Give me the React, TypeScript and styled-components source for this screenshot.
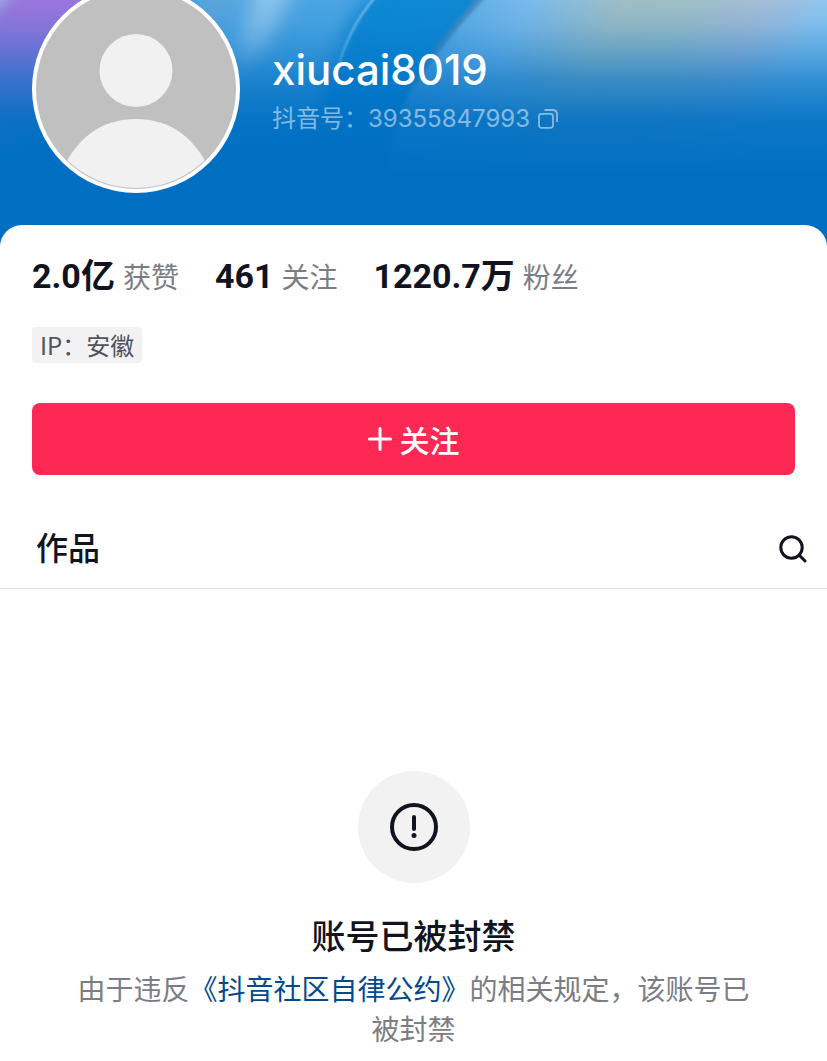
import React from "react";
import styled, { createGlobalStyle } from "styled-components";

const GlobalStyle = createGlobalStyle`
  *, *::before, *::after { box-sizing: border-box; }
  body {
    margin: 0;
    background: #fff;
    color: #11141f;
    font-family: Inter, "Noto Sans CJK SC", sans-serif;
  }
  h1, h2, p, dl, dd, dt { margin: 0; }
  button { border: 0; padding: 0; background: none; font: inherit; color: inherit; cursor: pointer; }
`;

const Page = styled.div`
  display: flex;
  flex-direction: column;
`;

const Hero = styled.header`
  display: flex;
  align-items: flex-start;
  gap: 32px;
  padding: 0 32px 56px;
  position: relative;
  overflow: hidden;
  background: #006fc2;
`;

const Backdrop = styled.svg`
  position: absolute;
  inset: 0;
  width: 100%;
  height: 100%;
`;

const Avatar = styled.svg`
  position: relative;
  flex: none;
  display: block;
  width: 208px;
  height: 208px;
  margin-top: -15px;
`;

const Identity = styled.div`
  position: relative;
  display: flex;
  flex-direction: column;
  padding-top: 40px;
`;

const UserName = styled.h1`
  color: #fff;
  font-size: 42px;
  line-height: 60px;
  font-weight: 500;
`;

const AccountId = styled.div`
  display: flex;
  align-items: center;
  gap: 8px;
  color: rgba(255, 255, 255, 0.5);
  font-size: 24px;
  line-height: 38px;
`;

const IconButton = styled.button`
  display: flex;
`;

const Sheet = styled.main`
  position: relative;
  margin-top: -24px;
  padding-top: 27px;
  border-radius: 22px 22px 0 0;
  background: #fff;
`;

const Summary = styled.section`
  display: flex;
  flex-direction: column;
  align-items: flex-start;
  padding: 0 32px;
`;

const Stats = styled.dl`
  display: flex;
  gap: 36px;
`;

const Stat = styled.div`
  display: flex;
  align-items: center;
  flex-direction: row-reverse;
  gap: 8px;
  line-height: 48px;
`;

const StatLabel = styled.dt`
  color: #7c7d84;
  font-family: "Noto Sans CJK SC", sans-serif;
  font-size: 28px;
`;

const StatValue = styled.dd`
  font-family: Roboto, "Noto Sans CJK SC", sans-serif;
  font-size: 34px;
  font-weight: 700;
`;

const Tag = styled.span`
  margin-top: 27px;
  padding: 0 8px;
  border-radius: 4px;
  background: #f2f2f4;
  color: #50525c;
  font-family: "Noto Sans CJK SC", sans-serif;
  font-size: 24px;
  line-height: 36px;
`;

const FollowButton = styled.button`
  align-self: stretch;
  display: flex;
  align-items: center;
  justify-content: center;
  gap: 8px;
  height: 72px;
  margin-top: 40px;
  border-radius: 8px;
  && {
    background: #fe2854;
    color: #fff;
    font-family: "Noto Sans CJK SC", sans-serif;
    font-size: 30px;
    line-height: 40px;
    font-weight: 500;
  }
`;

const WorksBar = styled.section`
  display: flex;
  align-items: center;
  justify-content: space-between;
  height: 80px;
  margin-top: 34px;
  padding: 0 20px 0 36px;
  border-bottom: 1px solid #e0e0e2;
`;

const WorksTitle = styled.h2`
  font-size: 32px;
  line-height: 48px;
  font-weight: 500;
`;

const Empty = styled.section`
  display: flex;
  flex-direction: column;
  align-items: center;
  padding: 182px 64px 12px;
  text-align: center;
`;

const NoticeBadge = styled.div`
  display: flex;
  align-items: center;
  justify-content: center;
  width: 112px;
  height: 112px;
  border-radius: 50%;
  background: #f2f2f2;
`;

const NoticeTitle = styled.h2`
  margin-top: 30px;
  font-size: 34px;
  line-height: 48px;
  font-weight: 500;
`;

const NoticeText = styled.p`
  max-width: 700px;
  margin-top: 7px;
  color: #7c7d84;
  font-family: "Noto Sans CJK SC", sans-serif;
  font-size: 28px;
  line-height: 40px;
`;

const NoticeLink = styled.a`
  color: #04498d;
  text-decoration: none;
`;

const stats = [
  { value: "2.0亿", label: "获赞" },
  { value: "461", label: "关注" },
  { value: "1220.7万", label: "粉丝" },
];

function HeroBackdrop() {
  return (
    <Backdrop viewBox="0 0 827 249" preserveAspectRatio="none" aria-hidden="true">
      <defs>
        <linearGradient id="fade" x1="0" y1="0" x2="0" y2="1">
          <stop offset="0" stopColor="#006fc2" stopOpacity="0" />
          <stop offset="0.1" stopColor="#006fc2" stopOpacity="0.12" />
          <stop offset="0.2" stopColor="#006fc2" stopOpacity="0.34" />
          <stop offset="0.32" stopColor="#006fc2" stopOpacity="0.64" />
          <stop offset="0.48" stopColor="#006fc2" stopOpacity="0.91" />
          <stop offset="0.7" stopColor="#006fc2" />
        </linearGradient>
        <linearGradient id="glow" x1="470" y1="0" x2="760" y2="150" gradientUnits="userSpaceOnUse">
          <stop offset="0" stopColor="#62b0e8" />
          <stop offset="0.16" stopColor="#7abaec" />
          <stop offset="0.42" stopColor="#a0bfc4" />
          <stop offset="0.62" stopColor="#9fbfc8" />
          <stop offset="0.8" stopColor="#a6bcd8" />
          <stop offset="1" stopColor="#8cc8f4" />
        </linearGradient>
        <filter id="soft" x="-50%" y="-50%" width="200%" height="200%">
          <feGaussianBlur stdDeviation="10" />
        </filter>
        <filter id="fine" x="-20%" y="-20%" width="140%" height="140%">
          <feGaussianBlur stdDeviation="2" />
        </filter>
        <filter id="hair" x="-20%" y="-20%" width="140%" height="140%">
          <feGaussianBlur stdDeviation="1" />
        </filter>
      </defs>
      <rect width="827" height="249" fill="#0f88d4" />
      <g filter="url(#soft)">
        <path d="M-40 -40H150L90 80L-40 190Z" fill="#9a74dc" />
        <path d="M-50 -50H44L-24 22Z" fill="#a0d4ee" />
        <path d="M180 -40H400L350 20L310 130H200Z" fill="#4ba6e2" />
        <path d="M190 -30H262L225 30L190 60Z" fill="#5aa6de" />
        <path d="M262 -30H300L262 50L235 70Z" fill="#8cc6ee" />
      </g>
      <path d="M374 -4Q337 45 324 120L300 200H420V-4Z" fill="#0f88d4" opacity="0.75" filter="url(#fine)" />
      <path d="M484 -6Q450 32 414 84Q390 130 380 210H840V-6Z" fill="url(#glow)" filter="url(#fine)" />
      <path d="M486 -6Q446 32 414 84" fill="none" stroke="#4c84b0" strokeWidth="4" filter="url(#fine)" />
      <path d="M376 -4Q348 28 336 74" fill="none" stroke="#86c6ee" strokeWidth="2" filter="url(#hair)" />
      <rect width="827" height="249" fill="url(#fade)" />
    </Backdrop>
  );
}

function ProfileAvatar() {
  return (
    <Avatar viewBox="0 0 208 208" role="img" aria-label="xiucai8019">
      <defs>
        <clipPath id="face"><circle cx="104" cy="104" r="99" /></clipPath>
      </defs>
      <circle cx="104" cy="104" r="104" fill="#fff" />
      <circle cx="104" cy="104" r="100" fill="#c0c0c0" />
      <g clipPath="url(#face)" fill="#f1f1f1">
        <circle cx="104" cy="85.500" r="36.500" />
        <path d="M28 190C44 152 70 134 104 134S164 152 180 190V208H28Z" />
      </g>
    </Avatar>
  );
}

export default function App() {
  return (
    <>
      <GlobalStyle />
      <Page>
        <Hero>
          <HeroBackdrop />
          <ProfileAvatar />
          <Identity>
            <UserName>xiucai8019</UserName>
            <AccountId>
              <span>抖音号：39355847993</span>
              <IconButton type="button" aria-label="复制抖音号">
                <svg width="20" height="20" viewBox="0 0 20 20" fill="none" stroke="currentColor" strokeWidth="1.800">
                  <rect x="1" y="4.800" width="14" height="14" rx="2.500" />
                  <path d="M6.500 1H14.500Q19 1 19 5.500V13" />
                </svg>
              </IconButton>
            </AccountId>
          </Identity>
        </Hero>
        <Sheet>
          <Summary>
            <Stats>
              {stats.map((s) => (
                <Stat key={s.label}>
                  <StatLabel>{s.label}</StatLabel>
                  <StatValue>{s.value}</StatValue>
                </Stat>
              ))}
            </Stats>
            <Tag>IP：安徽</Tag>
            <FollowButton type="button">
              <svg width="24" height="24" viewBox="0 0 24 24" fill="none" stroke="currentColor" strokeWidth="3" strokeLinecap="round" aria-hidden="true">
                <path d="M12 1.500V22.500M1.500 12H22.500" />
              </svg>
              关注
            </FollowButton>
          </Summary>
          <WorksBar>
            <WorksTitle>作品</WorksTitle>
            <IconButton type="button" aria-label="搜索">
              <svg width="28" height="28" viewBox="0 0 28 28" fill="none" stroke="currentColor" strokeWidth="3" strokeLinecap="round">
                <circle cx="12.500" cy="12.500" r="10.700" />
                <path d="M20.500 20.500L26 26" />
              </svg>
            </IconButton>
          </WorksBar>
          <Empty>
            <NoticeBadge>
              <svg width="48" height="48" viewBox="0 0 48 48" fill="none" stroke="#11141f" strokeWidth="4" strokeLinecap="round" aria-hidden="true">
                <circle cx="24" cy="24" r="22" />
                <path d="M24 14V26" />
                <circle cx="24" cy="32.500" r="2.500" fill="#11141f" stroke="none" />
              </svg>
            </NoticeBadge>
            <NoticeTitle>账号已被封禁</NoticeTitle>
            <NoticeText>
              由于违反<NoticeLink href="#convention">《抖音社区自律公约》</NoticeLink>的相关规定，该账号已被封禁
            </NoticeText>
          </Empty>
        </Sheet>
      </Page>
    </>
  );
}
